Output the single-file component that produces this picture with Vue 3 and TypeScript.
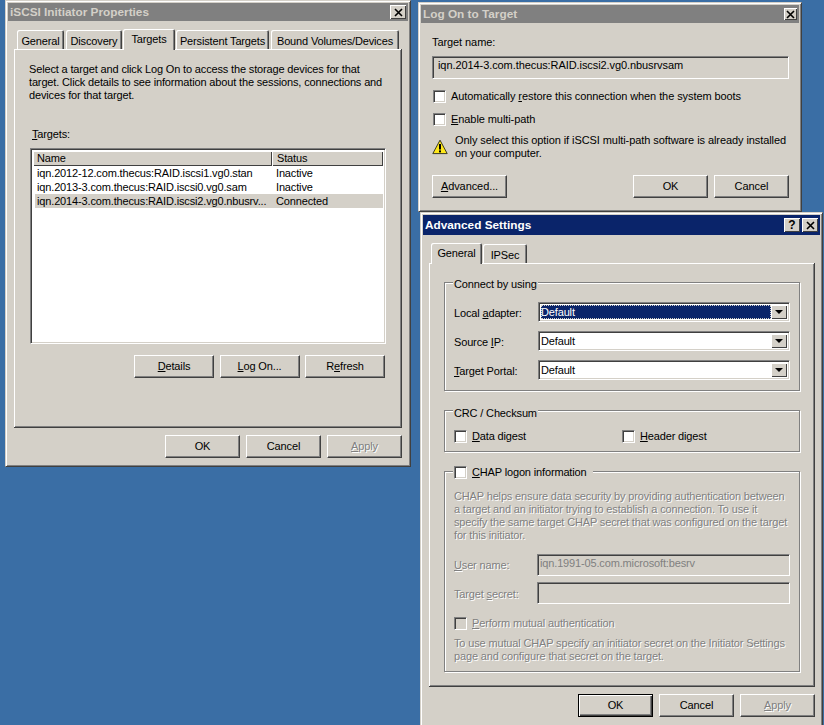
<script setup lang="ts">
const tabs = ["General", "Discovery", "Targets", "Persistent Targets", "Bound Volumes/Devices"];

const targets = [
  { name: "iqn.2012-12.com.thecus:RAID.iscsi1.vg0.stan", status: "Inactive", selected: false },
  { name: "iqn.2013-3.com.thecus:RAID.iscsi0.vg0.sam", status: "Inactive", selected: false },
  { name: "iqn.2014-3.com.thecus:RAID.iscsi2.vg0.nbusrv...", status: "Connected", selected: true },
];
</script>

<template>
  <div class="desktop">
    <!-- properties window -->
    <section class="win win-props">
      <header class="title inactive">
        <span>iSCSI Initiator Properties</span>
        <span class="cap-btn">
          <svg width="9" height="9" viewBox="0 0 9 9"><path d="M1 1l7 7M8 1l-7 7" stroke="#000" stroke-width="1.6" /></svg>
        </span>
      </header>
      <div class="tabs tabs-props">
        <div v-for="t in tabs" :key="t" class="tab" :class="{ active: t === 'Targets' }">{{ t }}</div>
      </div>
      <div class="panel panel-props">
        <p class="intro">
          Select a target and click Log On to access the storage devices for that<br />
          target. Click details to see information about the sessions, connections and<br />
          devices for that target.
        </p>
        <div class="targets-label"><u>T</u>argets:</div>
        <div class="list sunken">
          <div class="list-head">
            <div class="col-name">Name</div>
            <div class="col-status">Status</div>
          </div>
          <div v-for="t in targets" :key="t.name" class="row" :class="{ selected: t.selected }">
            <span class="row-name">{{ t.name }}</span>
            <span class="row-status">{{ t.status }}</span>
          </div>
        </div>
        <div class="list-actions">
          <button class="btn wide"><u>D</u>etails</button>
          <button class="btn wide"><u>L</u>og On...</button>
          <button class="btn wide">R<u>e</u>fresh</button>
        </div>
      </div>
      <footer class="actions actions-props">
        <button class="btn">OK</button>
        <button class="btn">Cancel</button>
        <button class="btn off"><u>A</u>pply</button>
      </footer>
    </section>

    <!-- log on window -->
    <section class="win win-logon">
      <header class="title inactive">
        <span>Log On to Target</span>
        <span class="cap-btn">
          <svg width="9" height="9" viewBox="0 0 9 9"><path d="M1 1l7 7M8 1l-7 7" stroke="#000" stroke-width="1.6" /></svg>
        </span>
      </header>
      <div class="logon-body">
        <div class="name-label">Target name:</div>
        <div class="field sunken readonly">iqn.2014-3.com.thecus:RAID.iscsi2.vg0.nbusrvsam</div>
        <label class="check check-restore"><i class="box"></i><span>Automatically <u>r</u>estore this connection when the system boots</span></label>
        <label class="check check-multi"><i class="box"></i><span><u>E</u>nable multi-path</span></label>
        <div class="warning">
          <svg class="warn-icon" width="16" height="16" viewBox="0 0 16 16">
            <path d="M8 1.2L15.2 14.6H.8z" fill="#ffe81a" stroke="#3a3a20" stroke-width="1" stroke-linejoin="round" />
            <path d="M8 5v5.4" stroke="#000" stroke-width="2" />
            <rect x="7" y="11.4" width="2" height="2" fill="#000" />
          </svg>
          <p>Only select this option if iSCSI multi-path software is already installed<br />on your computer.</p>
        </div>
        <footer class="logon-actions">
          <button class="btn"><u>A</u>dvanced...</button>
          <span class="spacer"></span>
          <button class="btn">OK</button>
          <button class="btn">Cancel</button>
        </footer>
      </div>
    </section>

    <!-- advanced settings window -->
    <section class="win win-adv">
      <header class="title">
        <span>Advanced Settings</span>
        <span class="cap-group">
          <span class="cap-btn help">?</span>
          <span class="cap-btn">
            <svg width="9" height="9" viewBox="0 0 9 9"><path d="M1 1l7 7M8 1l-7 7" stroke="#000" stroke-width="1.6" /></svg>
          </span>
        </span>
      </header>
      <div class="tabs tabs-adv">
        <div class="tab active">General</div>
        <div class="tab">IPSec</div>
      </div>
      <div class="panel panel-adv">
        <div class="group group-connect">
          <div class="legend">Connect by using</div>
          <div class="combo-row">
            <span class="combo-label">Local <u>a</u>dapter:</span>
            <div class="combo sunken">
              <span class="combo-value focused">Default</span>
              <span class="combo-arrow"><i></i></span>
            </div>
          </div>
          <div class="combo-row">
            <span class="combo-label">Source <u>I</u>P:</span>
            <div class="combo sunken">
              <span class="combo-value">Default</span>
              <span class="combo-arrow"><i></i></span>
            </div>
          </div>
          <div class="combo-row">
            <span class="combo-label"><u>T</u>arget Portal:</span>
            <div class="combo sunken">
              <span class="combo-value">Default</span>
              <span class="combo-arrow"><i></i></span>
            </div>
          </div>
        </div>

        <div class="group group-crc">
          <div class="legend">CRC / Checksum</div>
          <label class="check digest"><i class="box"></i><span><u>D</u>ata digest</span></label>
          <label class="check"><i class="box"></i><span><u>H</u>eader digest</span></label>
        </div>

        <div class="group group-chap">
          <div class="legend legend-check">
            <label class="check"><i class="box"></i><span><u>C</u>HAP logon information</span></label>
          </div>
          <p class="muted chap-text">
            CHAP helps ensure data security by providing authentication between<br />
            a target and an initiator trying to establish a connection. To use it<br />
            specify the same target CHAP secret that was configured on the target<br />
            for this initiator.
          </p>
          <div class="chap-row chap-user">
            <span class="muted chap-label"><u>U</u>ser name:</span>
            <div class="field sunken readonly muted-field">iqn.1991-05.com.microsoft:besrv</div>
          </div>
          <div class="chap-row chap-secret">
            <span class="muted chap-label">Target <u>s</u>ecret:</span>
            <div class="field sunken readonly muted-field"></div>
          </div>
          <label class="check mutual muted"><i class="box disabled"></i><span><u>P</u>erform mutual authentication</span></label>
          <p class="muted chap-note">
            To use mutual CHAP specify an initiator secret on the Initiator Settings<br />
            page and configure that secret on the target.
          </p>
        </div>
      </div>
      <footer class="actions actions-adv">
        <button class="btn default">OK</button>
        <button class="btn">Cancel</button>
        <button class="btn off"><u>A</u>pply</button>
      </footer>
    </section>
  </div>
</template>

<style>
html,
body {
  margin: 0;
  background: #3a6ea5;
}
</style>

<style scoped>
.desktop {
  position: relative;
  width: 824px;
  height: 725px;
  overflow: hidden;
  background: #3a6ea5;
  font-family: "Liberation Sans", Arial, sans-serif;
  font-size: 11px;
  line-height: 13px;
  letter-spacing: -0.15px;
  color: #000;
}

p {
  margin: 0;
}

u {
  text-decoration: underline;
}

.win {
  position: absolute;
  box-sizing: border-box;
  padding: 2px;
  background: #d4d0c8;
  border: 1px solid;
  border-color: #d4d0c8 #404040 #404040 #d4d0c8;
  box-shadow: inset 1px 1px 0 #fff, inset -1px -1px 0 #808080;
}

.win-props {
  left: 5px;
  top: 0;
  width: 406px;
  height: 467px;
}

.win-logon {
  left: 418px;
  top: 2px;
  width: 384px;
  height: 210px;
  letter-spacing: -0.08px;
}

.win-adv {
  left: 420px;
  top: 212px;
  width: 403px;
  height: 521px;
}

.title {
  display: flex;
  align-items: center;
  justify-content: space-between;
  height: 18px;
  padding: 0 2px 0 2px;
  background: #0a246a;
  color: #fff;
  font-weight: 700;
  font-size: 11.8px;
  letter-spacing: 0;
}

.win-adv .title {
  height: 20px;
}

.title.inactive {
  background: #808080;
  color: #d4d0c8;
}

.win-logon .cap-btn {
  width: 13px;
  height: 12px;
}

.cap-group {
  display: flex;
  gap: 2px;
}

.cap-btn {
  display: flex;
  align-items: center;
  justify-content: center;
  box-sizing: border-box;
  width: 16px;
  height: 14px;
  background: #d4d0c8;
  box-shadow: inset 1px 1px 0 #fff, inset -1px -1px 0 #404040;
  color: #000;
}

.help {
  font-size: 12px;
  font-weight: 700;
}

.tabs {
  display: flex;
  align-items: flex-end;
  height: 22px;
  margin-top: 7px;
  position: relative;
  z-index: 1;
}

.tabs-props {
  margin-left: 9px;
}

.tabs-adv {
  margin-left: 9px;
  margin-top: 7px;
}

.tab {
  box-sizing: border-box;
  height: 19px;
  margin-right: 2px;
  padding-top: 5px;
  text-align: center;
  background: #d4d0c8;
  border-radius: 2px 2px 0 0;
  box-shadow: inset 1px 1px 0 #fff, inset -1px 0 0 #404040, inset -2px 0 0 #808080;
  margin-bottom: 1px;
}

.tab.active {
  height: 21px;
  margin: 0 -1px 0 -1px;
  padding-top: 4px;
}

.tabs-props .tab:nth-child(1) {
  width: 47px;
}

.tabs-props .tab:nth-child(2) {
  width: 56px;
}

.tabs-props .tab:nth-child(3) {
  width: 52px;
  margin-right: 0;
}

.tabs-props .tab:nth-child(4) {
  width: 93px;
  margin-left: 1px;
}

.tabs-props .tab:nth-child(5) {
  width: 128px;
  margin-right: 0;
}

.tabs-adv .tab:nth-child(1) {
  width: 51px;
  margin-right: 0;
}

.tabs-adv .tab:nth-child(2) {
  width: 44px;
  margin-left: 1px;
}

.panel {
  box-sizing: border-box;
  display: flex;
  flex-direction: column;
  background: #d4d0c8;
  border-right: 1px solid #404040;
  border-bottom: 1px solid #404040;
  box-shadow: inset 1px 1px 0 #fff, inset -1px -1px 0 #808080;
}

.panel-props {
  width: 388px;
  height: 379px;
  margin: -1px 0 0 6px;
  padding: 14px 16px 0 15px;
}

.panel-adv {
  width: 386px;
  height: 424px;
  margin: -1px 0 0 6px;
  padding: 19px 14px 0 15px;
}

.intro {
  white-space: nowrap;
}

.targets-label {
  margin: 26px 0 7px 3px;
}

.sunken {
  border: 1px solid;
  border-color: #808080 #fff #fff #808080;
  box-shadow: inset 1px 1px 0 #404040, inset -1px -1px 0 #d4d0c8;
}

.list {
  box-sizing: border-box;
  width: 356px;
  height: 196px;
  margin-left: 1px;
  padding: 2px 2px 0 2px;
  background: #fff;
}

.list-head {
  display: flex;
  height: 15px;
  background: #d4d0c8;
}

.col-name,
.col-status {
  box-sizing: border-box;
  padding: 1px 0 0 4px;
  box-shadow: inset 1px 1px 0 #fff, inset -1px -1px 0 #404040;
}

.col-name {
  width: 239px;
}

.col-status {
  flex: 1;
  padding-left: 5px;
}

.row {
  display: flex;
  height: 14px;
  margin-left: 2px;
  padding-left: 2px;
  line-height: 14px;
}

.row.selected {
  background: #d4d0c8;
}

.row-name {
  width: 239px;
  white-space: nowrap;
}

.row-status {
  white-space: nowrap;
}

.list-actions {
  display: flex;
  justify-content: flex-end;
  gap: 5.5px;
  margin-top: 11px;
}

.btn {
  box-sizing: border-box;
  width: 75px;
  height: 23px;
  padding: 0;
  font: inherit;
  letter-spacing: inherit;
  color: #000;
  background: #d4d0c8;
  border: 1px solid;
  border-color: #fff #404040 #404040 #fff;
  box-shadow: inset -1px -1px 0 #808080;
}

.btn.wide {
  width: 80px;
}

.btn.off {
  color: #808080;
  text-shadow: 1px 1px 0 #fff;
}

.btn.default {
  outline: 1px solid #000;
  outline-offset: -1px;
  box-shadow: inset 1px 1px 0 #fff, inset -1px -1px 0 #404040, inset -2px -2px 0 #808080;
}

.actions {
  display: flex;
  justify-content: flex-end;
  gap: 6px;
}

.actions-props {
  margin: 7px 6px 0 0;
}

.actions-adv {
  margin: 7px 0 0 0;
  width: 392px;
}

.logon-body {
  display: flex;
  flex-direction: column;
  padding: 13px 10px 0 11px;
}

.name-label {
  margin-bottom: 7px;
}

.field {
  box-sizing: border-box;
  height: 23px;
  padding-left: 5px;
  line-height: 17px;
  white-space: nowrap;
}

.readonly {
  background: #d4d0c8;
}

.check {
  display: flex;
  align-items: center;
  white-space: nowrap;
}

.box {
  box-sizing: border-box;
  flex: none;
  width: 13px;
  height: 13px;
  margin-right: 5px;
  background: #fff;
  border: 1px solid;
  border-color: #808080 #fff #fff #808080;
  box-shadow: inset 1px 1px 0 #404040, inset -1px -1px 0 #d4d0c8;
}

.box.disabled {
  background: #d4d0c8;
}

.check-restore {
  margin: 11px 0 0 1px;
}

.check-multi {
  margin: 10px 0 0 1px;
}

.warning {
  display: flex;
  gap: 7px;
  margin-top: 8px;
  height: 34px;
}

.warn-icon {
  flex: none;
  margin: 5px 0 0 0;
}

.warning p {
  white-space: nowrap;
}

.logon-actions {
  display: flex;
  gap: 6px;
  margin-top: 7px;
}

.spacer {
  flex: 1;
}

.group {
  position: relative;
  box-sizing: border-box;
  width: 356px;
  padding: 0 9px;
  border: 1px solid #808080;
  box-shadow: inset 1px 1px 0 #fff, 1px 1px 0 #fff;
}

.legend {
  position: absolute;
  left: 8px;
  top: -5px;
  padding: 0 1px;
  background: #d4d0c8;
}

.group-connect {
  height: 109px;
  padding-top: 19px;
}

.combo-row {
  display: flex;
  align-items: center;
  height: 19px;
  margin-bottom: 10px;
}

.combo-label {
  width: 84px;
  flex: none;
  padding-top: 4px;
}

.combo {
  box-sizing: border-box;
  display: flex;
  width: 252px;
  height: 20px;
  padding: 2px;
  background: #fff;
}

.combo-value {
  flex: 1;
  line-height: 15px;
}

.combo-value.focused {
  background: #0a246a;
  color: #fff;
  outline: 1px dotted #d4d0c8;
  outline-offset: -1px;
}

.combo-arrow {
  display: flex;
  align-items: center;
  justify-content: center;
  flex: none;
  width: 16px;
  background: #d4d0c8;
  box-shadow: inset 1px 1px 0 #fff, inset -1px -1px 0 #404040;
}

.combo-arrow i {
  border-style: solid;
  border-width: 4px 4px 0 4px;
  border-color: #000 transparent transparent;
}

.group-crc {
  display: flex;
  align-items: center;
  height: 42px;
  margin-top: 19px;
  padding-top: 11px;
}

.group-crc .legend {
  top: -4px;
}

.digest {
  width: 168px;
}

.group-chap {
  height: 201px;
  margin-top: 19px;
  padding-top: 18px;
}

.group-chap .legend-check {
  top: -6px;
  padding-right: 6px;
}

.muted {
  color: #808080;
  text-shadow: 1px 1px 0 #fff;
}

.chap-text,
.chap-note {
  white-space: nowrap;
}

.chap-row {
  display: flex;
  align-items: center;
}

.chap-user {
  margin-top: 12px;
}

.chap-secret {
  margin-top: 6px;
}

.chap-secret .chap-label {
  padding-top: 2px;
}

.chap-label {
  width: 83px;
  flex: none;
}

.muted-field {
  width: 253px;
  height: 22px;
  color: #808080;
  padding-left: 2px;
}

.mutual {
  margin-top: 13px;
}

.chap-note {
  margin-top: 7px;
}
</style>
